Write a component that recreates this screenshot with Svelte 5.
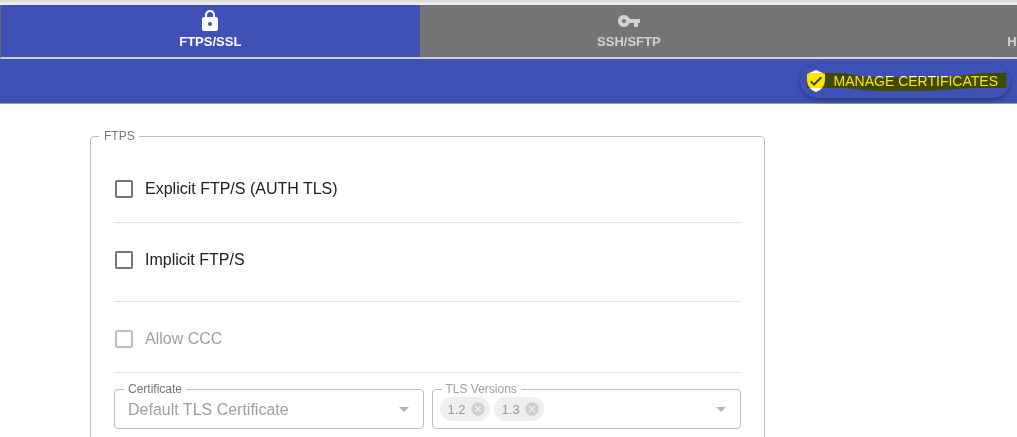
<script>
  let active = $state('ftps');
  let explicit = $state(false);
  let implicit = $state(false);
  const tabs = [
    { id: 'ftps', label: 'FTPS/SSL', icon: 'M18 8h-1V6c0-2.76-2.24-5-5-5S7 3.24 7 6v2H6c-1.1 0-2 .9-2 2v10c0 1.1.9 2 2 2h12c1.1 0 2-.9 2-2V10c0-1.1-.9-2-2-2zm-6 9c-1.1 0-2-.9-2-2s.9-2 2-2 2 .9 2 2-.9 2-2 2zm3.1-9H8.9V6c0-1.71 1.39-3.1 3.1-3.1 1.71 0 3.1 1.39 3.1 3.1v2z' },
    { id: 'ssh', label: 'SSH/SFTP', icon: 'M12.65 10C11.83 7.67 9.61 6 7 6c-3.31 0-6 2.69-6 6s2.69 6 6 6c2.61 0 4.83-1.67 5.65-4H17v4h4v-4h2v-4H12.65zM7 14c-1.1 0-2-.9-2-2s.9-2 2-2 2 .9 2 2-.9 2-2 2z' },
    { id: 'http', label: 'HTTP/HTTPS', icon: 'M3.9 12c0-1.71 1.39-3.1 3.1-3.1h4V7H7c-2.76 0-5 2.24-5 5s2.24 5 5 5h4v-1.9H7c-1.71 0-3.1-1.39-3.1-3.1zM8 13h8v-2H8v2zm9-6h-4v1.9h4c1.71 0 3.1 1.39 3.1 3.1s-1.39 3.1-3.1 3.1h-4V17h4c2.76 0 5-2.24 5-5s-2.24-5-5-5z' }
  ];
  const versions = ['1.2', '1.3'];
</script>

<div class="page">
  <div class="shade"></div>
  <nav class="tabs">
    {#each tabs as tab}
      <button class="tab" class:active={active === tab.id} onclick={() => (active = tab.id)}>
        <svg width="24" height="24" viewBox="0 0 24 24" aria-hidden="true"><path d={tab.icon} /></svg>
        <span>{tab.label}</span>
      </button>
    {/each}
  </nav>

  <div class="toolbar">
    <button class="manage">
      <svg width="24" height="24" viewBox="0 0 24 24" aria-hidden="true"><path d="M12 1L3 5v6c0 5.55 3.84 10.74 9 12 5.16-1.26 9-6.45 9-12V5l-9-4zm-2 16l-4-4 1.41-1.41L10 14.17l6.59-6.59L18 9l-8 8z" /></svg>
      <span>MANAGE CERTIFICATES</span>
      <svg class="marker" viewBox="0 0 202 20" preserveAspectRatio="none" aria-hidden="true">
        <path d="M0 1H34C44 2 54 5 66 5H136C154 5 168 1 186 1H201V16H176C150 16 140 19 112 19H74C56 19 48 16 34 16H0Z" />
      </svg>
    </button>
  </div>

  <main>
    <fieldset class="group">
      <legend>FTPS</legend>
      <div class="row first">
        <label><input type="checkbox" bind:checked={explicit} />Explicit FTP/S (AUTH TLS)</label>
      </div>
      <div class="row second">
        <label><input type="checkbox" bind:checked={implicit} />Implicit FTP/S</label>
      </div>
      <div class="row third">
        <label class="off"><input type="checkbox" disabled />Allow CCC</label>
      </div>
      <div class="fields">
        <fieldset class="field">
          <legend><label for="certificate">Certificate</label></legend>
          <select id="certificate" disabled><option>Default TLS Certificate</option></select>
          <svg class="arrow" width="24" height="24" viewBox="0 0 24 24" aria-hidden="true"><path d="M7 10l5 5 5-5z" /></svg>
        </fieldset>
        <fieldset class="field versions">
          <legend>TLS Versions</legend>
          <div class="chips">
            {#each versions as version}
              <span class="chip">{version}
                <button disabled aria-label="Remove {version}">
                  <svg width="16" height="16" viewBox="0 0 24 24" aria-hidden="true"><path d="M12 2C6.47 2 2 6.47 2 12s4.47 10 10 10 10-4.47 10-10S17.53 2 12 2zm5 13.59L15.59 17 12 13.41 8.41 17 7 15.59 10.59 12 7 8.41 8.41 7 12 10.59 15.59 7 17 8.41 13.41 12 17 15.59z" /></svg>
                </button>
              </span>
            {/each}
          </div>
          <svg class="arrow" width="24" height="24" viewBox="0 0 24 24" aria-hidden="true"><path d="M7 10l5 5 5-5z" /></svg>
        </fieldset>
      </div>
    </fieldset>
  </main>
</div>

<style>
  :global(body) {
    margin: 0;
    background: #fff;
  }
  .page {
    height: 100vh;
    overflow: hidden;
    font-family: "Liberation Sans", Arial, sans-serif;
    font-size: 16px;
    color: #212121;
  }
  .page * {
    box-sizing: border-box;
  }
  button {
    font-family: inherit;
    border: 0;
    padding: 0;
    cursor: pointer;
  }
  svg {
    fill: currentColor;
    flex: none;
    display: block;
  }
  .shade {
    height: 5px;
    background: linear-gradient(#d8d8d8, #f2f2f2);
  }
  .tabs {
    display: grid;
    grid-template-columns: repeat(3, 41.2%);
    height: 54px;
    overflow: hidden;
    background: #757575;
    border-left: 1px solid #6a6a6a;
    border-bottom: 2px solid #d0d0d0;
  }
  .tab {
    display: flex;
    flex-direction: column;
    align-items: center;
    padding-top: 4px;
    background: #757575;
    color: #d2d2d2;
    font-size: 13px;
    font-weight: 700;
    line-height: 18px;
  }
  .tab.active {
    background: #3f51b5;
    color: #fff;
  }
  .toolbar {
    display: flex;
    justify-content: flex-end;
    align-items: center;
    height: 45px;
    padding-right: 7px;
    background: #3f51b5;
    border-bottom: 1px solid #9a9a9a;
  }
  .manage {
    position: relative;
    display: flex;
    align-items: center;
    gap: 6px;
    height: 34px;
    padding: 0 12px 0 4px;
    border-radius: 17px;
    background: #3f51b5;
    color: #fff;
    font-size: 14px;
    box-shadow: 0 2px 5px rgba(0, 0, 0, 0.35);
  }
  .marker {
    position: absolute;
    left: 7px;
    top: 8px;
    width: calc(100% - 10px);
    height: 20px;
    fill: #ffe600;
    mix-blend-mode: multiply;
  }
  main {
    padding: 24px 252px 0 90px;
  }
  fieldset {
    margin: 0;
    min-width: 0;
    border: 1px solid #bdbdbd;
    border-radius: 4px;
  }
  .group {
    padding: 0 23px 24px;
  }
  legend {
    font-size: 12px;
    line-height: 16px;
    color: #757575;
  }
  .group > legend {
    margin-left: -15px;
    padding: 0 4px 0 5px;
  }
  .row {
    display: flex;
    align-items: center;
    border-bottom: 1px solid #e0e0e0;
  }
  .first {
    height: 79px;
    padding-top: 12px;
  }
  .second {
    height: 79px;
    padding-bottom: 4px;
  }
  .third {
    height: 71px;
    padding-top: 4px;
  }
  .row label {
    display: flex;
    align-items: center;
    gap: 12px;
    padding-left: 1px;
  }
  .row .off {
    color: #9e9e9e;
  }
  input {
    appearance: none;
    width: 18px;
    height: 18px;
    margin: 0;
    border: 2px solid #757575;
    border-radius: 2px;
  }
  input:checked {
    background: #3f51b5;
    border-color: #3f51b5;
  }
  input:disabled {
    border-color: #bdbdbd;
  }
  .fields {
    display: grid;
    grid-template-columns: 1fr 1fr;
    gap: 8px;
    padding-top: 8px;
  }
  .field {
    position: relative;
    height: 48px;
    padding: 0;
  }
  .field legend {
    margin-left: 9px;
    padding: 0 4px;
  }
  .versions legend {
    color: #9e9e9e;
  }
  select {
    appearance: none;
    width: 100%;
    height: 24px;
    padding: 0 32px 0 13px;
    border: 0;
    background: transparent;
    font-family: inherit;
    font-size: 16px;
    color: #9e9e9e;
    opacity: 1;
  }
  .arrow {
    position: absolute;
    right: 7px;
    top: 0;
    color: #b5b5b5;
    pointer-events: none;
  }
  .chips {
    display: flex;
    gap: 4px;
    padding-left: 7px;
  }
  .chip {
    display: flex;
    align-items: center;
    gap: 4px;
    height: 24px;
    padding: 0 4px 0 8px;
    border-radius: 12px;
    background: #efefef;
    color: #9a9a9a;
    font-size: 13px;
  }
  .chip button {
    background: transparent;
    color: #cfcfcf;
  }
</style>
